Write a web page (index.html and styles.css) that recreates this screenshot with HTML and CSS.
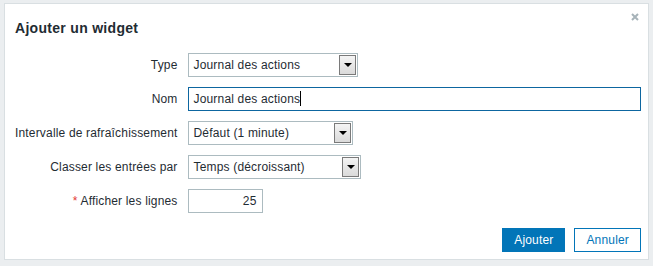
FILE: index.html
```html
<!DOCTYPE html>
<html lang="fr">

<head>
  <meta charset="UTF-8">
  <meta name="viewport" content="width=device-width, initial-scale=1.0">
  <title>Ajouter un widget</title>
  <link rel="stylesheet" href="styles.css">
</head>

<body>
  <div class="dialog">
    <div class="dialog-header">
      <h4>Ajouter un widget</h4>
      <button class="btn-close" type="button" title="Fermer">
        <svg width="8" height="8" viewBox="0 0 8 8">
          <path d="M1 1 L7 7 M7 1 L1 7" stroke="#a7b3b9" stroke-width="2" />
        </svg>
      </button>
    </div>

    <form class="form-grid">
      <label class="form-label">Type</label>
      <div class="select select-type">
        <span>Journal des actions</span>
        <span class="select-arrow"></span>
      </div>

      <label class="form-label">Nom</label>
      <div class="text-field focused">Journal des actions<span class="caret"></span></div>

      <label class="form-label">Intervalle de rafraîchissement</label>
      <div class="select select-refresh">
        <span>Défaut (1 minute)</span>
        <span class="select-arrow"></span>
      </div>

      <label class="form-label">Classer les entrées par</label>
      <div class="select select-sort">
        <span>Temps (décroissant)</span>
        <span class="select-arrow"></span>
      </div>

      <label class="form-label"><span class="asterisk">*</span> Afficher les lignes</label>
      <div class="text-field number-field">25</div>
    </form>

    <div class="dialog-footer">
      <button type="button" class="btn btn-primary">Ajouter</button>
      <button type="button" class="btn btn-alt">Annuler</button>
    </div>
  </div>
</body>

</html>
```

FILE: styles.css
```css
html,
body {
  margin: 0;
  padding: 0;
}

body {
  background-color: #ebeef0;
  font-family: "Liberation Sans", Arial, sans-serif;
  font-size: 12px;
  letter-spacing: 0.17px;
  color: #1f2c33;
  padding: 3px 4px 6px 4px;
  height: 266px;
  box-sizing: border-box;
}

.dialog {
  background-color: #fff;
  border: 1px solid #d9dfe2;
  height: 100%;
  box-sizing: border-box;
  padding: 0 7px 0 10px;
}

.dialog-header {
  display: flex;
  justify-content: space-between;
  align-items: flex-start;
  height: 49px;
}

.dialog-header h4 {
  margin: 0;
  padding-top: 15px;
  font-size: 14px;
  font-weight: bold;
  line-height: 18px;
  letter-spacing: 0.3px;
}

.btn-close {
  border: none;
  background: none;
  padding: 0;
  margin: 9px 2px 0 0;
  cursor: pointer;
  line-height: 0;
}

.form-grid {
  display: grid;
  grid-template-columns: max-content 1fr;
  column-gap: 10px;
  row-gap: 10px;
  align-items: center;
}

.form-label {
  text-align: right;
}

.asterisk {
  color: #e33734;
}

.select {
  position: relative;
  height: 24px;
  box-sizing: border-box;
  border: 1px solid #acbbc0;
  padding: 0 5px;
  line-height: 22px;
  background: #fff;
}

.select-type {
  width: 170px;
}

.select-refresh {
  width: 165px;
}

.select-sort {
  width: 173px;
}

.select-arrow {
  position: absolute;
  top: 1px;
  right: 1px;
  width: 17px;
  height: 20px;
  box-sizing: border-box;
  border: 1px solid #7a7a7a;
  background: linear-gradient(#f4f4f4, #dadada);
}

.select-arrow::after {
  content: "";
  position: absolute;
  left: 4px;
  top: 7px;
  border-left: 4px solid transparent;
  border-right: 4px solid transparent;
  border-top: 4px solid #000;
}

.text-field {
  height: 24px;
  box-sizing: border-box;
  border: 1px solid #acbbc0;
  padding: 0 5px;
  line-height: 22px;
}

.text-field.focused {
  border-color: #0d66a0;
}

.caret {
  display: inline-block;
  width: 1px;
  height: 15px;
  background: #000;
  vertical-align: -3px;
}

.number-field {
  width: 75px;
  text-align: right;
}

.dialog-footer {
  display: flex;
  justify-content: flex-end;
  gap: 9px;
  margin-top: 15px;
}

.btn {
  height: 24px;
  padding: 0 11px;
  font-family: inherit;
  font-size: 12px;
  letter-spacing: 0.17px;
  border: 1px solid #0275b8;
  cursor: pointer;
}

.btn-primary {
  background-color: #0275b8;
  color: #fff;
}

.btn-alt {
  background-color: #fff;
  color: #0275b8;
}
```
